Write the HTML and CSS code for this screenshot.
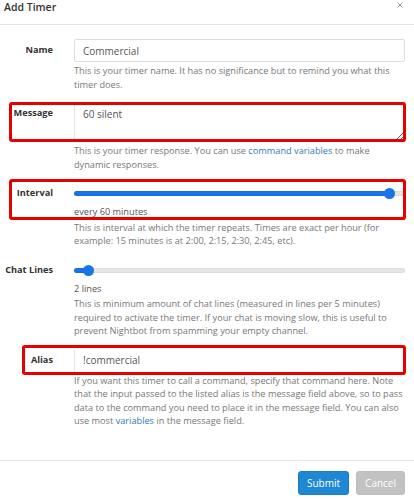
FILE: index.html
```html
<!DOCTYPE html>
<html lang="en">
<head>
    <meta charset="UTF-8">
    <meta name="viewport" content="width=device-width, initial-scale=1.0">
    <title>Add Timer</title>
    <link rel="stylesheet" href="styles.css">
</head>
<body>
    <div class="modal">
        <div class="modal-header">
            <h4 class="modal-title">Add Timer</h4>
            <button class="close" type="button" aria-label="Close">
                <svg width="6" height="6" viewBox="0 0 6 6"><path d="M0.5 0.5L5.5 5.5M5.5 0.5L0.5 5.5" stroke="#a0a0a0" stroke-width="1" fill="none"/></svg>
            </button>
        </div>

        <form class="modal-body">
            <div class="form-group">
                <div class="form-line">
                    <label class="control-label">Name</label>
                    <input class="form-control" type="text" value="Commercial">
                </div>
                <p class="help-block">This is your timer name. It has no significance but to remind you what this timer does.</p>
            </div>

            <div class="form-group">
                <div class="form-line marked mark-message">
                    <label class="control-label">Message</label>
                    <textarea class="form-control">60 silent</textarea>
                </div>
                <p class="help-block">This is your timer response. You can use <a href="#">command variables</a> to make dynamic responses.</p>
            </div>

            <div class="form-group">
                <div class="form-line marked mark-interval">
                    <label class="control-label">Interval</label>
                    <div class="range-field">
                        <input type="range" min="0" max="62" value="60" style="--fill: 95%">
                        <div class="range-value">every 60 minutes</div>
                    </div>
                </div>
                <p class="help-block">This is interval at which the timer repeats. Times are exact per hour (for example: 15 minutes is at 2:00, 2:15, 2:30, 2:45, etc).</p>
            </div>

            <div class="form-group">
                <div class="form-line">
                    <label class="control-label">Chat Lines</label>
                    <div class="range-field">
                        <input type="range" min="0" max="75" value="2" style="--fill: 4%">
                        <div class="range-value">2 lines</div>
                    </div>
                </div>
                <p class="help-block">This is minimum amount of chat lines (measured in lines per 5 minutes) required to activate the timer. If your chat is moving slow, this is useful to prevent Nightbot from spamming your empty channel.</p>
            </div>

            <div class="form-group">
                <div class="form-line marked mark-alias">
                    <label class="control-label">Alias</label>
                    <input class="form-control" type="text" value="!commercial">
                </div>
                <p class="help-block help-wide">If you want this timer to call a command, specify that command here. Note that the input passed to the listed alias is the message field above, so to pass data to the command you need to place it in the message field. You can also use most <a href="#">variables</a> in the message field.</p>
            </div>
        </form>

        <div class="modal-footer">
            <button class="btn btn-primary" type="button">Submit</button>
            <button class="btn btn-default" type="button">Cancel</button>
        </div>
    </div>
</body>
</html>
```

FILE: styles.css
```css
* {
    box-sizing: border-box;
}
body {
    margin: 0;
    font-family: 'Open Sans', 'Liberation Sans', sans-serif;
    color: #333;
    background-color: #fff;
}
.modal-header {
    height: 25px;
    padding: 0 4px;
    border-bottom: 1px solid #e5e5e5;
    display: flex;
    justify-content: space-between;
    align-items: flex-start;
}
.modal-title {
    margin: 0;
    padding-top: 1px;
    font-size: 10.5px;
    font-weight: 600;
    line-height: 13px;
    color: #333;
}
.close {
    background: none;
    border: none;
    padding: 0;
    margin: 2px 7px 0 0;
    line-height: 0;
    cursor: pointer;
}
.modal-body {
    margin: 0;
    padding: 14px 9px 32px 0;
}
.form-group {
    margin-bottom: 11px;
}
.form-group:last-child {
    margin-bottom: 0;
}
.form-line {
    display: grid;
    grid-template-columns: 53px 1fr;
    column-gap: 21px;
    position: relative;
}
.control-label {
    text-align: right;
    font-size: 9.2px;
    font-weight: 700;
    line-height: 13.5px;
    padding-top: 4px;
    color: #333;
    white-space: nowrap;
}
.form-control {
    display: block;
    width: 100%;
    height: 23px;
    margin: 0;
    padding: 0 8px;
    font-family: 'Open Sans', 'Liberation Sans', sans-serif;
    font-size: 10px;
    color: #555;
    background-color: #fff;
    border: 1px solid #ddd;
    border-radius: 2px;
    outline: none;
}
textarea.form-control {
    height: 40px;
    padding: 5px 8px;
    line-height: 13.5px;
    resize: vertical;
}
.help-block {
    margin: 2px 3px 0 74px;
    font-size: 9.2px;
    line-height: 13.5px;
    color: #777;
}
.help-wide {
    margin-right: -4px;
}
.help-block a {
    color: #337ab7;
    text-decoration: none;
}
.range-value {
    font-size: 9.2px;
    line-height: 13.5px;
    color: #555;
}

/* slider */
input[type="range"] {
    -webkit-appearance: none;
    appearance: none;
    display: block;
    width: 100%;
    height: 23px;
    margin: 0;
    background: transparent;
}
input[type="range"]::-webkit-slider-runnable-track {
    height: 5px;
    border-radius: 3px;
    background: linear-gradient(to right, #1a73e8 var(--fill), #e6e6e6 var(--fill));
    box-shadow: inset 0 0 0 1px rgba(0, 0, 0, 0.04);
}
input[type="range"]::-webkit-slider-thumb {
    -webkit-appearance: none;
    width: 11px;
    height: 11px;
    margin-top: -3px;
    border: none;
    border-radius: 50%;
    background-color: #1a73e8;
}

/* red highlight boxes */
.marked .form-control {
    border-color: transparent;
    border-left-color: #e3e3e3;
    border-radius: 0;
}
.marked::after {
    content: "";
    position: absolute;
    border: 3px solid #e60000;
    border-radius: 3px;
    pointer-events: none;
}
.mark-message::after {
    top: 0;
    bottom: 0;
    left: 9px;
    right: -1px;
}
.mark-interval::after {
    top: -3px;
    bottom: -1px;
    left: 9px;
    right: -1px;
}
.mark-alias::after {
    top: -3.5px;
    bottom: -3.5px;
    left: 22px;
    right: -1px;
}

.modal-footer {
    border-top: 1px solid #e5e5e5;
    padding: 10px 9px;
    display: flex;
    justify-content: flex-end;
    gap: 7px;
}
.btn {
    height: 24px;
    padding: 0 8px;
    font-family: 'Open Sans', 'Liberation Sans', sans-serif;
    font-size: 10px;
    color: #fff;
    border-radius: 3px;
    cursor: pointer;
}
.btn-primary {
    background-color: #1e88d4;
    border: 1px solid #1a7cc2;
}
.btn-default {
    background-color: #c2c2c2;
    border: 1px solid #bdbdbd;
}
```
